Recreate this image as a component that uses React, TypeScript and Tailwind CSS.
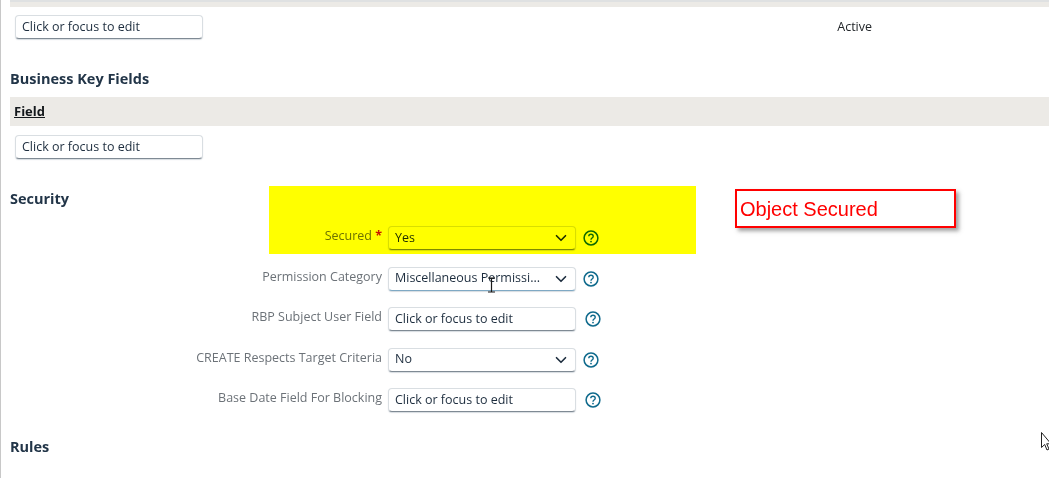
import React from 'react';
import { ChevronDown } from 'lucide-react';

const fieldBox =
    'flex items-center justify-between w-[188px] h-[24px] pl-[6px] pr-[5px] rounded-[4px] border border-[#d9dee2] border-b-[#7f8a94] bg-white text-[12.5px] text-[#1d2d3e] shadow-[0_1px_1px_rgba(90,110,130,0.25)]';

const TextBox: React.FC = () => <div className={fieldBox}>Click or focus to edit</div>;

const SelectBox: React.FC<{ value: string; focused?: boolean }> = ({ value, focused }) => (
    <div className={`${fieldBox} ${focused ? 'border-[#a9cfe6] border-b-[#7fa9c4]' : ''}`}>
        <span>{value}</span>
        <ChevronDown size={18} strokeWidth={2.2} className="text-[#1d2d3e]" />
    </div>
);

const HelpIcon: React.FC<{ nudge?: boolean }> = ({ nudge }) => (
    <svg width="16" height="16" viewBox="0 0 16 16" fill="none" className={nudge ? 'ml-[9px]' : 'ml-[7px]'}>
        <circle cx="8" cy="8" r="6.9" stroke="#0f6a8c" strokeWidth="1.5" />
        <path d="M5.8 6.3c0-1.3 1-2.1 2.2-2.1s2.2.8 2.2 2c0 1.9-2.2 1.8-2.2 3.5" stroke="#0f6a8c" strokeWidth="1.4" />
        <circle cx="8" cy="11.6" r="0.9" fill="#0f6a8c" />
    </svg>
);

const FormRow: React.FC<{ label: string; required?: boolean; nudge?: boolean; children: React.ReactNode }> = ({
    label,
    required,
    nudge,
    children,
}) => (
    <div className="flex items-center h-[24px]">
        <div className="w-[372px] pb-[3px] text-right text-[12.5px] text-[#6c7278] whitespace-nowrap">
            {label}
            {required && <span className="text-[#c8161d] font-bold"> *</span>}
        </div>
        <div className="ml-[6px]">{children}</div>
        <HelpIcon nudge={nudge} />
    </div>
);

const Heading: React.FC<{ children: React.ReactNode }> = ({ children }) => (
    <h2 className="text-[14.5px] leading-[20px] font-bold text-[#223548]">{children}</h2>
);

const App: React.FC = () => {
    return (
        <div className="relative w-[1049px] h-[478px] overflow-hidden bg-white border-l border-[#c8c8c8] pl-[9px] font-['Open_Sans','Noto_Sans',sans-serif]">
            {/* Table header cut off at the top */}
            <div className="h-[7px] bg-[#eceae6] border-t-2 border-[#dfe1e2]" />

            <div className="flex items-center mt-[8px] pl-[5px] pr-[177px] justify-between">
                <TextBox />
                <span className="text-[12.5px] text-[#22262a]">Active</span>
            </div>

            <div className="mt-[30px]">
                <Heading>Business Key Fields</Heading>
            </div>
            <div className="flex items-center h-[29px] mt-[8px] pl-[4px] pt-[1px] bg-[#eceae6]">
                <span className="text-[13px] font-bold underline text-[#14181c]">Field</span>
            </div>
            <div className="mt-[9px] pl-[5px]">
                <TextBox />
            </div>

            <div className="mt-[30px]">
                <Heading>Security</Heading>
            </div>

            <div className="flex flex-col gap-[16.5px] mt-[17px]">
                <FormRow label="Secured" required>
                    <SelectBox value="Yes" />
                </FormRow>
                <FormRow label="Permission Category">
                    <SelectBox value="Miscellaneous Permissi..." focused />
                </FormRow>
                <FormRow label="RBP Subject User Field" nudge>
                    <TextBox />
                </FormRow>
                <FormRow label="CREATE Respects Target Criteria">
                    <SelectBox value="No" />
                </FormRow>
                <FormRow label="Base Date Field For Blocking" nudge>
                    <TextBox />
                </FormRow>
            </div>

            <div className="mt-[25px]">
                <Heading>Rules</Heading>
            </div>

            {/* Highlighter over the Secured row */}
            <div className="absolute left-[268px] top-[186px] w-[427px] h-[68px] bg-[#ffff00] mix-blend-multiply" />

            {/* Annotation */}
            <div className="absolute left-[734px] top-[189px] w-[221px] h-[39px] flex items-center pl-[3px] bg-white border-2 border-[#ff0000] shadow-[3px_3px_4px_rgba(80,80,80,0.55)] font-['Liberation_Sans',sans-serif] text-[20px] text-[#ff0000]">
                Object Secured
            </div>

            {/* Text cursor */}
            <svg className="absolute left-[485px] top-[277px]" width="11" height="16" viewBox="0 0 11 16" fill="none" stroke="#1a1a1a" strokeWidth="1.2">
                <path d="M2 1h7M5.5 1v14M2 15h7" />
            </svg>

            {/* Arrow cursor */}
            <svg className="absolute left-[1040px] top-[432px]" width="10" height="20" viewBox="0 0 10 20" fill="white" stroke="#222" strokeWidth="1">
                <path d="M0.5 0.5v15l3.2-3 2.3 5.5 2-1-2.3-5.2h4.3z" />
            </svg>
        </div>
    );
};

export default App;
